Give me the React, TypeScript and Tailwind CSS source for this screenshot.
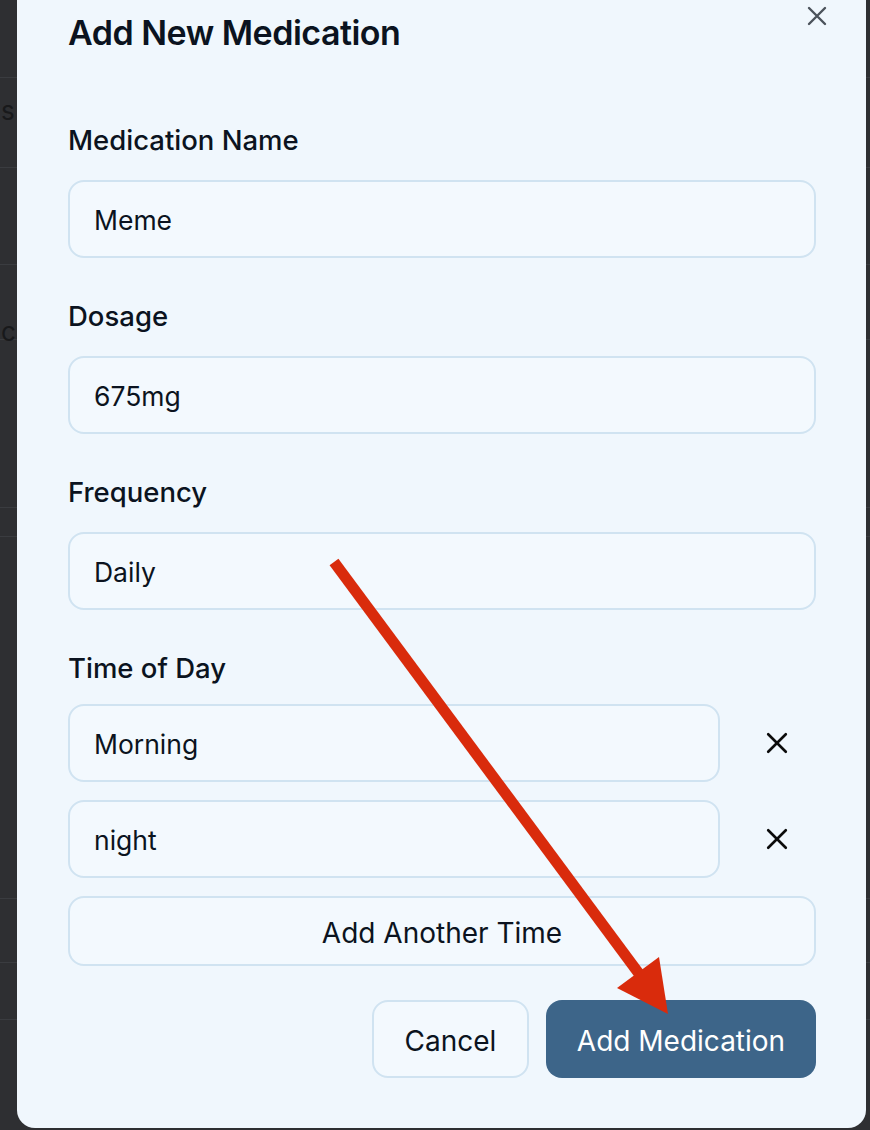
import React from "react";

const font = { fontFamily: "Inter, 'Noto Sans', sans-serif" };

function Cross({ size, className }: { size: number; className?: string }) {
  return (
    <svg width={size} height={size} viewBox="0 0 20 20" className={className} fill="none">
      <path d="M2 2L18 18M18 2L2 18" stroke="currentColor" strokeWidth="2.4" strokeLinecap="round" />
    </svg>
  );
}

function Field({ label, value }: { label: string; value: string }) {
  return (
    <div className="flex flex-col">
      <label className="text-[27.5px] leading-[36px] font-medium text-[#0b1320]">{label}</label>
      <div className="mt-[22px] h-[78px] rounded-[16px] border-2 border-[#d0e3f1] bg-[#f3f9fe] px-[24px] pt-[3px] flex items-center text-[26.5px] text-[#0b1320]">
        {value}
      </div>
    </div>
  );
}

function TimeRow({ value }: { value: string }) {
  return (
    <div className="flex items-center gap-[18px]">
      <div className="h-[78px] w-[652px] rounded-[16px] border-2 border-[#d0e3f1] bg-[#f3f9fe] px-[24px] pt-[3px] flex items-center text-[26.5px] text-[#0b1320]">
        {value}
      </div>
      <button type="button" className="flex-1 flex items-center justify-center text-[#0b0b0b]">
        <Cross size={22} />
      </button>
    </div>
  );
}

export default function App() {
  return (
    <div className="relative h-[1130px] w-[870px] overflow-hidden bg-[#2e2f32]" style={font}>
      {/* page behind the overlay */}
      <div className="flex flex-col text-[26px] text-[#18191b]">
        <div className="h-[78px] border-b border-[#3a3c40]" />
        <div className="h-[90px] border-b border-[#3a3c40] pl-[1px] pt-[18px] leading-[30px]">s</div>
        <div className="h-[97px] border-b border-[#3a3c40]" />
        <div className="h-[75px] border-b border-[#3a3c40] pl-[1px] pt-[52px] leading-[30px]">c</div>
        <div className="h-[168px] border-b border-[#3a3c40]" />
        <div className="h-[29px] border-b border-[#3a3c40]" />
        <div className="h-[362px] border-b border-[#3a3c40]" />
        <div className="h-[64px] border-b border-[#3a3c40]" />
        <div className="h-[57px] border-b border-[#3a3c40]" />
      </div>

      {/* modal */}
      <div className="absolute left-[17px] top-0 w-[849px] h-[1128px] rounded-b-[18px] bg-[#f0f7fd] pl-[51px] pr-[50px] pt-[11px]">
        <button type="button" className="absolute right-[39px] top-[6px] text-[#4b525b]">
          <Cross size={20} />
        </button>
        <h2 className="text-[34px] leading-[44px] font-semibold tracking-[-0.5px] text-[#0b1320]">Add New Medication</h2>

        <div className="mt-[67px] flex flex-col gap-[40px]">
          <Field label="Medication Name" value="Meme" />
          <Field label="Dosage" value="675mg" />
          <Field label="Frequency" value="Daily" />
        </div>

        <div className="mt-[40px] flex flex-col">
          <label className="text-[27.5px] leading-[36px] font-medium text-[#0b1320]">Time of Day</label>
          <div className="mt-[18px] flex flex-col gap-[18px]">
            <TimeRow value="Morning" />
            <TimeRow value="night" />
            <button
              type="button"
              className="h-[70px] rounded-[16px] border-2 border-[#d0e3f1] bg-[#f3f9fe] pt-[3px] text-[28px] text-[#0b1320]"
            >
              Add Another Time
            </button>
          </div>
        </div>

        <div className="mt-[34px] flex justify-end gap-[17px]">
          <button
            type="button"
            className="h-[78px] w-[157px] rounded-[16px] border-2 border-[#d0e3f1] bg-[#f3f9fe] pt-[3px] text-[28px] text-[#0b1320]"
          >
            Cancel
          </button>
          <button
            type="button"
            className="h-[78px] w-[270px] rounded-[16px] bg-[#3d6589] pt-[3px] text-[28px] text-white"
          >
            Add Medication
          </button>
        </div>
      </div>

      {/* red annotation arrow */}
      <svg className="absolute inset-0 pointer-events-none" width="870" height="1130" viewBox="0 0 870 1130">
        <line x1="334" y1="562" x2="640" y2="975" stroke="#d92b0c" strokeWidth="11" />
        <polygon points="617,988 659,957 668,1014" fill="#d92b0c" />
      </svg>
    </div>
  );
}
